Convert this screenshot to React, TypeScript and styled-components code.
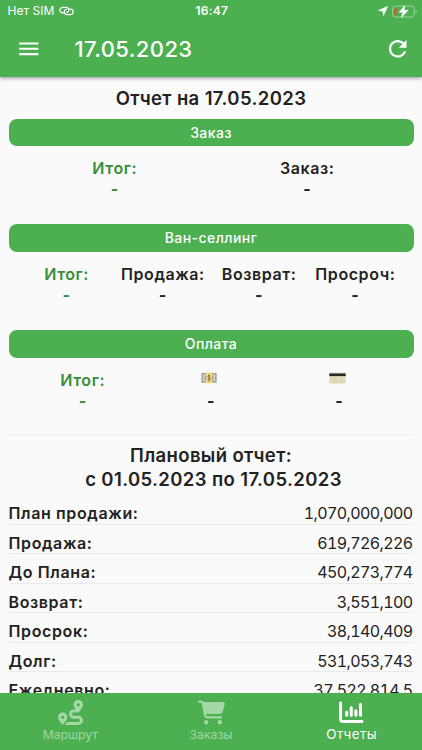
import React from "react";
import styled, { createGlobalStyle } from "styled-components";
import { MdMenu } from "react-icons/md";
import { IoMdRefresh } from "react-icons/io";
import { FaCartShopping, FaChartColumn, FaRoute } from "react-icons/fa6";

const GlobalStyle = createGlobalStyle`
  * { box-sizing: border-box; }
  body { margin: 0; background: #fafafa; }
`;

const Screen = styled.div`
  width: 422px;
  height: 750px;
  display: flex;
  flex-direction: column;
  overflow: hidden;
  background: #fafafa;
  color: #222;
  font-family: Inter, "Noto Sans", sans-serif;
`;

const Header = styled.header`
  flex: none;
  height: 77px;
  background: #4caf50;
  color: #fff;
  box-shadow: 0 1px 4px rgba(0, 0, 0, 0.42);
  z-index: 1;
`;

const StatusBar = styled.div`
  height: 22px;
  padding: 0 5px 0 7.5px;
  display: grid;
  grid-template-columns: 1fr auto 1fr;
  align-items: center;
  font-size: 12px;
  line-height: 22px;
`;

const StatusGroup = styled.div<{ $end?: boolean }>`
  display: flex;
  align-items: center;
  gap: 4px;
  justify-content: ${(p) => (p.$end ? "flex-end" : "flex-start")};
  letter-spacing: 0.05px;
`;

const Clock = styled.div`
  font-weight: 600;
  letter-spacing: 0.25px;
  margin-right: 1px;
`;

const Toolbar = styled.div`
  height: 54px;
  padding: 0 12px 0 16px;
  display: flex;
  align-items: center;
`;

const IconButton = styled.button`
  border: 0;
  padding: 0;
  background: none;
  color: inherit;
  display: flex;
  font-size: 25.5px;
`;

const Title = styled.h1`
  flex: 1;
  margin: 0 0 0 33px;
  font-size: 22px;
  line-height: 28px;
  font-weight: 500;
  letter-spacing: 0.4px;
`;

const Content = styled.main`
  flex: 1;
  min-height: 0;
  overflow: hidden;
  padding: 9px 8.5px 0;
`;

const Heading = styled.h2`
  margin: 0;
  text-align: center;
  font-size: 18.5px;
  line-height: 24px;
  font-weight: 600;
  letter-spacing: 0.38px;
`;

const Period = styled.span`
  display: block;
  padding-left: 5px;
`;

const Section = styled.section<{ $first?: boolean; $last?: boolean }>`
  height: ${(p) => (p.$last ? "104px" : "105.8px")};
  margin-top: ${(p) => (p.$first ? "8.5px" : "0")};
`;

const Bar = styled.div`
  height: 27.5px;
  border-radius: 8px;
  background: #4caf50;
  color: #fff;
  text-align: center;
  font-size: 14px;
  line-height: 27px;
  font-weight: 500;
  letter-spacing: 0.45px;
`;

const Columns = styled.div`
  display: flex;
  padding: 11px 10px 0;
`;

const Column = styled.div<{ $green?: boolean }>`
  flex: 1 1 0;
  min-width: 0;
  text-align: center;
  white-space: nowrap;
  font-size: 16px;
  line-height: 22px;
  font-weight: 600;
  letter-spacing: 0.58px;
  color: ${(p) => (p.$green ? "#388e3c" : "#222")};
`;

const ColumnLabel = styled.div`
  height: 22px;
  display: flex;
  align-items: center;
  justify-content: center;
`;

const ColumnValue = styled.div`
  font-weight: 700;
  line-height: 21px;
`;

const Emoji = styled.span`
  display: flex;
  padding: 0 3px 3px 0;
`;

const Divider = styled.hr`
  margin: 0 0 8px;
  border: 0;
  height: 1px;
  background: #eeeeee;
`;

const Rows = styled.div`
  margin-top: 4px;
`;

const Row = styled.div`
  height: 29.5px;
  padding-top: 7px;
  display: flex;
  justify-content: space-between;
  border-bottom: 1px solid #eaeaea;
  font-size: 16px;
  line-height: 22px;
`;

const RowLabel = styled.span`
  font-weight: 600;
  letter-spacing: 0.62px;
`;

const RowValue = styled.span`
  padding-right: 1px;
  font-weight: 400;
  font-variant-numeric: tabular-nums;
  letter-spacing: -0.6px;
`;

const BottomNav = styled.nav`
  flex: none;
  height: 57.5px;
  display: flex;
  background: #4caf50;
`;

const Tab = styled.a<{ $active?: boolean }>`
  flex: 1;
  display: flex;
  flex-direction: column;
  align-items: center;
  padding-top: 7px;
  color: ${(p) => (p.$active ? "#fff" : "#a3d7a5")};
  font-size: ${(p) => (p.$active ? "13.4px" : "12.2px")};
  line-height: ${(p) => (p.$active ? "14px" : "16px")};
  letter-spacing: ${(p) => (p.$active ? "0.4px" : "0")};
`;

const TabIcon = styled.div`
  height: 26px;
  margin-bottom: 1px;
  display: flex;
  align-items: center;
`;

const LinkIcon = () => (
  <svg width="15" height="10" viewBox="0 0 15 10" fill="none" stroke="currentColor" strokeWidth="1.1" strokeLinecap="round">
    <path d="M5.1 6.9H3.9C2 6.9.8 5.7.8 4.2S2 1.4 3.9 1.4h2.8c1.9 0 3.1 1.2 3.1 2.7 0 1.3-1 2.4-2.4 2.7" />
    <path d="M9.9 3.1h1.2c1.9 0 3.1 1.2 3.1 2.7s-1.2 2.8-3.1 2.8H8.3C6.4 8.600 5.200 7.400 5.200 5.900c0-1.300 1-2.400 2.400-2.700" />
  </svg>
);

const LocationIcon = () => (
  <svg width="10" height="10" viewBox="0 0 10 10">
    <path d="M9.7.3 5.500 9.700 4.800 5.200.3 4.500Z" fill="#fff" stroke="#fff" strokeWidth=".5" strokeLinejoin="round" />
  </svg>
);

const BatteryIcon = () => (
  <svg width="25" height="13" viewBox="0 0 25 13">
    <rect x=".6" y="1" width="21.600" height="11" rx="3" fill="none" stroke="#9bd39d" />
    <path d="M23.500 5v3c.8-.2 1.200-.8 1.200-1.500S24.300 5.200 23.500 5Z" fill="#9bd39d" />
    <rect x="2.400" y="3.200" width="2.200" height="6.600" rx=".6" fill="#ee4a35" />
    <path d="M12.900.5 7 7.300h3.700L9.400 12.500l6.800-7.200h-4Z" fill="#fff" stroke="#fff" strokeWidth=".5" strokeLinejoin="round" />
  </svg>
);

const CashIcon = () => (
  <svg width="16" height="12" viewBox="0 0 16 12">
    <rect x=".3" y="1" width="15.400" height="9.800" fill="#a9ab9b" />
    <rect x="1.300" y="2" width="13.400" height="7.800" fill="#cfd0c2" stroke="#85877a" strokeWidth=".4" />
    <circle cx="8" cy="5.900" r="4.200" fill="#96978a" />
    <path d="M5.400.6h5.200v10.600H5.400Z" fill="#efcf68" />
    <path d="M5.400.6h1v10.600h-1Zm4.200 0h1v10.600h-1Z" fill="#f8e9ac" />
    <path d="M9.400 4.100C8.800 3.300 6.700 3.300 6.700 4.500c0 1.400 2.700 1 2.700 2.500 0 1.300-2.300 1.200-2.800.4M8 2.600v6.600" fill="none" stroke="#80611f" strokeWidth=".8" />
  </svg>
);

const CardIcon = () => (
  <svg width="17" height="12" viewBox="0 0 17 12">
    <rect x=".3" y=".5" width="16.400" height="11" rx="1" fill="#ddd8b4" />
    <rect x=".3" y="1.500" width="16.400" height="2.600" fill="#29271e" />
    <rect x="1.200" y="5.300" width="14.500" height="2.200" fill="#e9e6cf" />
    <path d="M2 6.600h6M11 6.600h3" stroke="#aaa68e" strokeWidth=".7" strokeDasharray="1.500 .5" />
  </svg>
);

type Cell = { label: React.ReactNode; green?: boolean };

const sections: { title: string; cells: Cell[] }[] = [
  { title: "Заказ", cells: [{ label: "Итог:", green: true }, { label: "Заказ:" }] },
  {
    title: "Ван-селлинг",
    cells: [{ label: "Итог:", green: true }, { label: "Продажа:" }, { label: "Возврат:" }, { label: "Просроч:" }],
  },
  {
    title: "Оплата",
    cells: [
      { label: "Итог:", green: true },
      { label: <Emoji><CashIcon /></Emoji> },
      { label: <Emoji><CardIcon /></Emoji> },
    ],
  },
];

const rows = [
  ["План продажи:", "1,070,000,000"],
  ["Продажа:", "619,726,226"],
  ["До Плана:", "450,273,774"],
  ["Возврат:", "3,551,100"],
  ["Просрок:", "38,140,409"],
  ["Долг:", "531,053,743"],
  ["Ежедневно:", "37,522,814.5"],
];

export default function App() {
  return (
    <Screen>
      <GlobalStyle />
      <Header>
        <StatusBar>
          <StatusGroup>
            Нет SIM <LinkIcon />
          </StatusGroup>
          <Clock>16:47</Clock>
          <StatusGroup $end>
            <LocationIcon />
            <BatteryIcon />
          </StatusGroup>
        </StatusBar>
        <Toolbar>
          <IconButton aria-label="Меню">
            <MdMenu />
          </IconButton>
          <Title>17.05.2023</Title>
          <IconButton aria-label="Обновить">
            <IoMdRefresh />
          </IconButton>
        </Toolbar>
      </Header>
      <Content>
        <Heading>Отчет на 17.05.2023</Heading>
        {sections.map((s, i) => (
          <Section key={s.title} $first={i === 0} $last={i === sections.length - 1}>
            <Bar>{s.title}</Bar>
            <Columns>
              {s.cells.map((c, j) => (
                <Column key={j} $green={c.green}>
                  <ColumnLabel>{c.label}</ColumnLabel>
                  <ColumnValue>-</ColumnValue>
                </Column>
              ))}
            </Columns>
          </Section>
        ))}
        <Divider />
        <Heading>
          Плановый отчет:
          <Period>с 01.05.2023 по 17.05.2023</Period>
        </Heading>
        <Rows>
          {rows.map(([label, value]) => (
            <Row key={label}>
              <RowLabel>{label}</RowLabel>
              <RowValue>{value}</RowValue>
            </Row>
          ))}
        </Rows>
      </Content>
      <BottomNav>
        <Tab>
          <TabIcon>
            <FaRoute size={25} />
          </TabIcon>
          Маршрут
        </Tab>
        <Tab>
          <TabIcon>
            <FaCartShopping size={27} />
          </TabIcon>
          Заказы
        </Tab>
        <Tab $active>
          <TabIcon>
            <FaChartColumn size={24.5} />
          </TabIcon>
          Отчеты
        </Tab>
      </BottomNav>
    </Screen>
  );
}
